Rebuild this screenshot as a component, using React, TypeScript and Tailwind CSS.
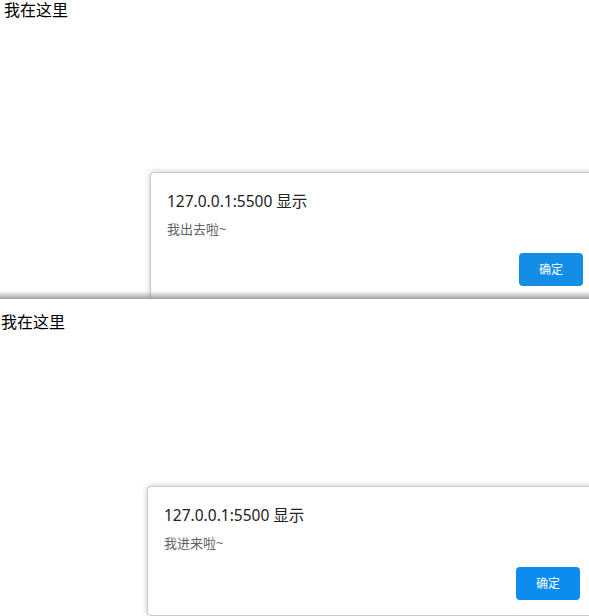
import React from "react";

const font = { fontFamily: '"Noto Sans", "Noto Sans CJK SC", sans-serif' };

function Dialog({ msg, btn }: { msg: string; btn: string }) {
  return (
    <div className="w-[452px] h-[130px] bg-white border border-[#c8c8c8] rounded-[4px] shadow-[0_0_6px_rgba(0,0,0,0.22)] pl-[16px] pr-[18px] pt-[16px] flex flex-col">
      <div className="text-[15.5px] leading-[24px] text-[#202124]">127.0.0.1:5500 显示</div>
      <div className="mt-[6px] text-[13px] leading-[20px] text-[#5f6368]">{msg}</div>
      <div className="mt-[14px] flex justify-end">
        <div className={`w-[64px] h-[33px] rounded-[4px] ${btn} text-white text-[12px] flex items-center justify-center`}>确定</div>
      </div>
    </div>
  );
}

export default function App() {
  return (
    <div className="w-[589px] h-[616px] bg-white overflow-hidden" style={font}>
      <section className="relative h-[299px] overflow-hidden">
        <div className="pl-[4px] text-[16px] leading-[20px] text-black">我在这里</div>
        <div className="ml-[150px] mt-[152px]">
          <Dialog msg="我出去啦~" btn="bg-[#138de6]" />
        </div>
        <div className="absolute bottom-0 left-0 right-0 h-[8px] bg-gradient-to-b from-[rgba(160,160,160,0)] to-[rgba(150,150,150,0.9)]" />
      </section>
      <section className="pt-[13px]">
        <div className="pl-[1px] text-[16px] leading-[20px] text-black">我在这里</div>
        <div className="ml-[147px] mt-[154px]">
          <Dialog msg="我进来啦~" btn="bg-[#0b8cee]" />
        </div>
      </section>
    </div>
  );
}
